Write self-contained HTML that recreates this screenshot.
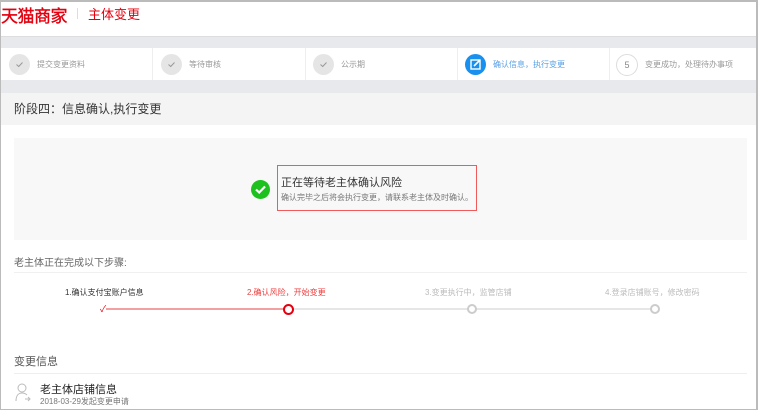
<!DOCTYPE html>
<html><head><meta charset="utf-8"><style>
*{margin:0;padding:0;box-sizing:border-box}
body{width:758px;height:410px;overflow:hidden;font-family:"Liberation Sans","Noto Sans CJK SC",sans-serif;background:#fff;position:relative}
.frame{position:absolute;left:0;top:0;width:758px;height:410px;border:1px solid #bbb;border-top:2px solid #bbb;border-right:2px solid #bbb}
.a{position:absolute;white-space:nowrap}
.ck{width:21px;height:21px;border-radius:50%;background:#e5e5e5}
</style></head><body>
<div class="a" style="left:0;top:36px;width:758px;height:12px;background:#e8e9ec;border-top:1px solid #ddd"></div>
<div class="a" style="left:0;top:48px;width:758px;height:32px;background:#fff"></div>
<div class="a" style="left:0;top:80px;width:758px;height:13px;background:#e8e9ec"></div>
<div class="a" style="left:0;top:93px;width:758px;height:32px;background:#f4f4f4"></div>
<div class="a" style="left:1px;top:2px;font-size:17px;color:#e4000f;letter-spacing:-0.5px;-webkit-text-stroke:0.4px #e4000f">天猫商家</div>
<div class="a" style="left:77px;top:8px;width:1px;height:11px;background:#ddd"></div>
<div class="a" style="left:88px;top:4px;font-size:13px;color:#e4000f">主体变更</div>

<div class="a" style="left:152px;top:48px;width:1px;height:32px;background:#eee"></div>
<div class="a" style="left:305px;top:48px;width:1px;height:32px;background:#eee"></div>
<div class="a" style="left:457px;top:48px;width:1px;height:32px;background:#eee"></div>
<div class="a" style="left:609px;top:48px;width:1px;height:32px;background:#eee"></div>
<svg class="a" style="left:9px;top:54px" width="21" height="21"><circle cx="10.5" cy="10.5" r="10.5" fill="#e5e5e5"/><path d="M7.5 10.5 L9.7 12.5 L13.5 8.5" fill="none" stroke="#999" stroke-width="1"/></svg>
<div class="a" style="left:37px;top:59px;font-size:8px;color:#999">提交变更资料</div>
<svg class="a" style="left:161px;top:54px" width="21" height="21"><circle cx="10.5" cy="10.5" r="10.5" fill="#e5e5e5"/><path d="M7.5 10.5 L9.7 12.5 L13.5 8.5" fill="none" stroke="#999" stroke-width="1"/></svg>
<div class="a" style="left:189px;top:59px;font-size:8px;color:#999">等待审核</div>
<svg class="a" style="left:313px;top:54px" width="21" height="21"><circle cx="10.5" cy="10.5" r="10.5" fill="#e5e5e5"/><path d="M7.5 10.5 L9.7 12.5 L13.5 8.5" fill="none" stroke="#999" stroke-width="1"/></svg>
<div class="a" style="left:341px;top:59px;font-size:8px;color:#999">公示期</div>
<div class="a" style="left:465px;top:54px;width:21px;height:21px;border-radius:50%;background:#1890f0">
<svg width="21" height="21" viewBox="0 0 21 21"><rect x="6" y="6" width="9" height="9" fill="none" stroke="#fff" stroke-width="1.4"/><path d="M9 12 L15 6" stroke="#fff" stroke-width="1.6"/></svg></div>
<div class="a" style="left:493px;top:59px;font-size:8px;color:#5aa0e6">确认信息，执行变更</div>
<div class="a" style="left:616px;top:54px;width:22px;height:22px;border-radius:50%;border:1px solid #ddd;color:#888;font-size:9px;text-align:center;line-height:20px">5</div>
<div class="a" style="left:645px;top:59px;font-size:8px;color:#999">变更成功，处理待办事项</div>

<div class="a" style="left:14px;top:100px;font-size:12px;color:#333">阶段四：信息确认,执行变更</div>

<div class="a" style="left:14px;top:138px;width:733px;height:102px;background:#f8f8f8"></div>
<div class="a" style="left:251px;top:180px;width:19px;height:19px;border-radius:50%;background:#1dc11d">
<svg width="19" height="19" viewBox="0 0 19 19"><path d="M5 9.5 L8.2 12.5 L14 6.5" fill="none" stroke="#fff" stroke-width="2.2"/></svg></div>
<div class="a" style="left:277px;top:165px;width:200px;height:46px;border:1px solid #f05a5a"></div>
<div class="a" style="left:281px;top:174px;font-size:11px;color:#333">正在等待老主体确认风险</div>
<div class="a" style="left:281px;top:192px;font-size:8px;color:#777">确认完毕之后将会执行变更，请联系老主体及时确认。</div>

<div class="a" style="left:14px;top:254px;font-size:10px;color:#666">老主体正在完成以下步骤:</div>
<div class="a" style="left:14px;top:272px;width:733px;height:1px;background:#f0f0f0"></div>
<div class="a" style="left:65px;top:287px;font-size:8px;color:#333">1.确认支付宝账户信息</div>
<div class="a" style="left:247px;top:287px;font-size:8px;color:#f03c3c">2.确认风险，开始变更</div>
<div class="a" style="left:425px;top:287px;font-size:8px;color:#bbb">3.变更执行中，监管店铺</div>
<div class="a" style="left:605px;top:287px;font-size:8px;color:#bbb">4.登录店铺账号，修改密码</div>
<div class="a" style="left:106px;top:308px;width:182px;height:2px;background:#f5a0a0"></div>
<div class="a" style="left:288px;top:308px;width:368px;height:2px;background:#e6e6e6"></div>
<div class="a" style="left:100px;top:302px;font-size:9px;color:#e4000f">✓</div>
<div class="a" style="left:283px;top:304px;width:11px;height:11px;border-radius:50%;border:2px solid #e4000f;background:#fff"></div>
<div class="a" style="left:467px;top:304px;width:10px;height:10px;border-radius:50%;border:2px solid #ccc;background:#fff"></div>
<div class="a" style="left:650px;top:304px;width:10px;height:10px;border-radius:50%;border:2px solid #ccc;background:#fff"></div>

<div class="a" style="left:14px;top:353px;font-size:11px;color:#555">变更信息</div>
<div class="a" style="left:14px;top:373px;width:733px;height:1px;background:#eee"></div>
<svg class="a" style="left:15px;top:383px" width="16" height="20" viewBox="0 0 16 20"><circle cx="7" cy="5" r="4" fill="none" stroke="#bbb"/><path d="M1 18 C1 12 4 10 7 10 C9 10 11 11 12 12 M10 16 L15 16 M13 14 L15 16 L13 18" fill="none" stroke="#bbb"/></svg>
<div class="a" style="left:40px;top:381px;font-size:11px;color:#222">老主体店铺信息</div>
<div class="a" style="left:40px;top:396px;font-size:8px;color:#777">2018-03-29发起变更申请</div>
<div class="frame"></div>
</body></html>
